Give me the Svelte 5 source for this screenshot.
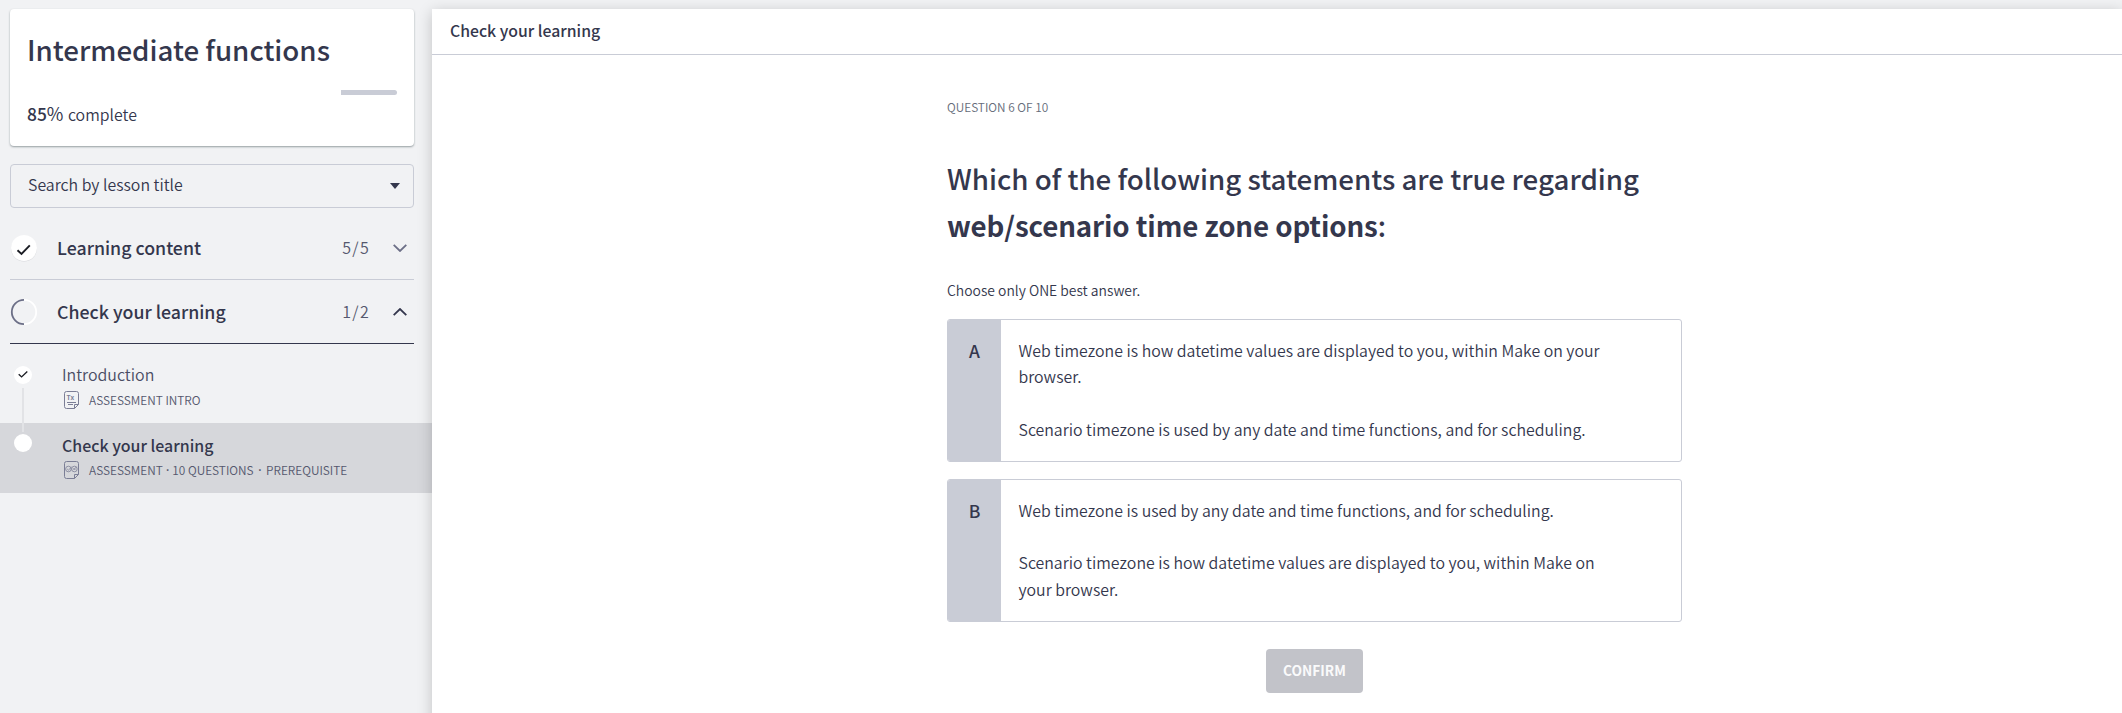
<script>
  let sections = [
    { title: 'Learning content', count: '5/5', done: true, open: false },
    { title: 'Check your learning', count: '1/2', done: false, open: true }
  ];
  let answers = [
    { key: 'A', lines: ['Web timezone is how datetime values are displayed to you, within Make on your', 'browser.', '', 'Scenario timezone is used by any date and time functions, and for scheduling.'] },
    { key: 'B', lines: ['Web timezone is used by any date and time functions, and for scheduling.', '', 'Scenario timezone is how datetime values are displayed to you, within Make on', 'your browser.'] }
  ];
</script>

<div class="page">
  <aside>
    <section class="card">
      <h1>Intermediate functions</h1>
      <div class="track"><div class="rest"></div></div>
      <p class="complete"><b>85</b><span class="pct">%</span> complete</p>
    </section>
    <div class="search"><span>Search by lesson title</span>
      <svg width="10" height="6" viewBox="0 0 10 6"><path d="M0 0H10L5 6Z" fill="#34374d" /></svg>
    </div>
    {#each sections as s}
      <div class="section" class:open={s.open}>
        {#if s.done}
          <svg width="28" height="28" viewBox="0 0 28 28"><circle cx="14" cy="14.6" r="13" fill="#d5d6da" /><circle cx="14" cy="14" r="13" fill="#fff" /><path d="M7.5 16.3L11.5 19.9L19.8 11.4" fill="none" stroke="#1b1d24" stroke-width="1.9" /></svg>
        {:else}
          <svg width="28" height="28" viewBox="0 0 28 28" fill="none" stroke-width="1.8"><path d="M14 1.8A12.2 12.2 0 0 1 14 26.2" stroke="#fff" /><path d="M14 1.8A12.2 12.2 0 0 0 14 26.2" stroke="#6c6f87" /></svg>
        {/if}
        <h2>{s.title}</h2>
        <span class="count">{s.count}</span>
        <svg class="chev" width="14" height="8" viewBox="0 0 14 8" fill="none" stroke-width="1.8"><path d={s.open ? 'M.7 7.2L7 1L13.3 7.2' : 'M.7 .8L7 7L13.3 .8'} stroke={s.open ? '#34374d' : '#6c6f87'} /></svg>
      </div>
    {/each}
    <div class="item first">
      <div class="rail"><i class="dot"><svg width="10" height="8" viewBox="0 0 10 8"><path d="M.7 3.2L3.6 5.9L9.3 .6" fill="none" stroke="#1b1d24" stroke-width="1.4" /></svg></i></div>
      <div>
        <h3>Introduction</h3>
        <p class="meta">
          <svg width="15" height="18" viewBox="0 0 15 18" fill="none" stroke="#7b7e96" stroke-width="1"><path d="M2.5 .5H12.5Q14.5 .5 14.5 2.5V13.5L10.5 17.5H2.5Q.5 17.5 .5 15.5V2.5Q.5 .5 2.5 .5ZM10.5 17.5V13.5H14.5M3 11.5H12M4 13.5H9" /><text class="tx" x="2.6" y="9.3">Tx</text></svg>
          <span>ASSESSMENT INTRO</span></p>
      </div>
    </div>
    <div class="item selected">
      <div class="rail"><i class="dot"></i></div>
      <div>
        <h3>Check your learning</h3>
        <p class="meta">
          <svg width="15" height="18" viewBox="0 0 15 18" fill="none" stroke="#7b7e96" stroke-width="1"><path d="M2.5 .5H12.5Q14.5 .5 14.5 2.5V13.5L10.5 17.5H2.5Q.5 17.5 .5 15.5V2.5Q.5 .5 2.5 .5ZM10.5 17.5V13.5H14.5" /><g stroke-width=".8"><circle cx="4.4" cy="8" r="2.8" /><circle cx="10.4" cy="8" r="2.8" /><path d="M3.2 8L4.4 9.1L7.6 6M9.4 7L11.4 9M12.6 5.8L9.4 9" /></g></svg>
          <span>ASSESSMENT<i class="sep">·</i>10 QUESTIONS<i class="sep wide">·</i>PREREQUISITE</span></p>
      </div>
    </div>
  </aside>
  <main>
    <header>Check your learning</header>
    <article>
      <p class="num">QUESTION 6 OF 10</p>
      <h2 class="q">Which of the following statements are true regarding<br /><b>web/scenario time zone options</b>:</h2>
      <p class="hint">Choose only ONE best answer.</p>
      {#each answers as a}
        <div class="answer">
          <div class="key">{a.key}</div>
          <div class="body">{#each a.lines as l}<p>{l}</p>{/each}</div>
        </div>
      {/each}
      <button>CONFIRM</button>
    </article>
  </main>
</div>

<style>
  :global(body) { background: #f1f2f4; overflow: hidden; }
  * { box-sizing: border-box; }
  h1, h2, h3, p { margin: 0; }
  .page { display: flex; width: 2122px; height: 713px; background: #f1f2f4; color: #34374d; font-family: "Noto Sans CJK SC", sans-serif; font-size: 15.88px; font-weight: 350; white-space: nowrap; overflow: hidden; }
  aside { width: 432px; flex: none; padding-top: 9px; }
  .card { margin-left: 10px; width: 404px; height: 137px; padding: 21px 17px 0; background: #fff; border-radius: 4px; box-shadow: 0 1px 2px rgba(60, 75, 80, .5); }
  h1 { font-size: 27.7px; line-height: 38px; font-weight: 500; }
  .track { display: flex; justify-content: flex-end; margin-top: 22px; height: 5px; }
  .rest { width: 56px; background: #c9ccd6; border-radius: 0 3px 3px 0; }
  .complete { margin-top: 6px; line-height: 24px; }
  b { font-weight: 700; }
  .complete b { font-size: 17.4px; font-weight: 500; }
  .pct { margin-right: 1px; font-size: 18px; font-weight: 400; }
  .search { display: flex; align-items: center; justify-content: space-between; margin: 18px 0 0 10px; width: 404px; height: 44px; padding: 0 13px 3px 17px; border: 1px solid #c9ccd6; border-radius: 4px; }
  .search svg { margin-top: 3px; }
  .section { display: flex; align-items: center; margin-left: 10px; width: 404px; height: 64px; border-bottom: 1px solid #c9ccd6; }
  .search + .section { height: 72px; padding-top: 8px; }
  .section.open { border-color: #34374d; }
  .section h2 { margin-left: 19px; padding-bottom: 2px; flex: 1; font-size: 17.75px; line-height: 24px; font-weight: 500; }
  .count { padding-bottom: 1px; font-size: 16px; letter-spacing: 1.3px; color: #55586e; }
  .chev { margin: 0 7px 0 23px; }
  .item { display: flex; height: 70px; }
  .first { height: 79px; padding-top: 9px; }
  .rail { width: 62px; position: relative; }
  .dot { position: absolute; left: 14px; top: 13px; width: 18px; height: 18px; border-radius: 50%; background: #fff; display: flex; align-items: center; justify-content: center; }
  .selected .dot { top: 11px; }
  .first .rail::after { content: ''; position: absolute; left: 22px; top: 35px; width: 2px; height: 44px; background: #e2e3e6; }
  .selected { background: #d6d7db; }
  h3 { margin-top: 10px; font-size: 15.95px; line-height: 24px; font-weight: 350; color: #4a4d64; }
  .first h3 { margin-top: 9px; }
  .first .meta { margin-top: 4px; }
  .selected h3 { font-weight: 500; color: #34374d; }
  .meta { display: flex; align-items: center; gap: 10px; margin: 3px 0 0 2px; font-size: 11.87px; line-height: 20px; color: #55586e; }
  .tx { font: 700 6.5px "Noto Sans CJK SC", sans-serif; fill: #7b7e96; stroke: none; }
  .sep { display: inline-block; width: 9.5px; text-align: center; font-style: normal; font-weight: 600; font-family: "Open Sans", sans-serif; }
  .sep.wide { width: 12.5px; }
  main { flex: 1; height: 720px; margin-top: 9px; background: #fff; box-shadow: 0 3px 14px rgba(0, 0, 0, .2); }
  header { height: 46px; padding: 0 18px; border-bottom: 1px solid #c9ccd6; font-size: 15.8px; line-height: 43px; font-weight: 500; }
  article { width: 735px; margin-left: 515px; padding-top: 42px; }
  .num { font-size: 11.85px; line-height: 20px; color: #666c7a; }
  .q { margin-top: 38px; font-size: 27.7px; line-height: 47px; font-weight: 500; }
  .q b { letter-spacing: -.1px; }
  .hint { margin-top: 31px; font-size: 13.9px; line-height: 20px; margin-bottom: 19px; }
  .answer { display: flex; height: 143px; margin-bottom: 17px; border: 1px solid #c9ccd6; border-radius: 3px; overflow: hidden; }
  .key { width: 53px; background: #c9ccd6; padding-top: 18px; text-align: center; font-size: 17.5px; line-height: 26px; font-weight: 500; }
  .body { padding: 18px 0 0 17.5px; line-height: 26.2px; }
  .body p { height: 26.2px; }
  button { display: block; margin: 27px 0 0 319px; width: 97px; height: 44px; padding: 0 0 2px; border: 0; border-radius: 4px; background: #c2c3c9; color: #fafafb; font: 700 13.7px/42px "Noto Sans CJK SC", sans-serif; }
</style>
